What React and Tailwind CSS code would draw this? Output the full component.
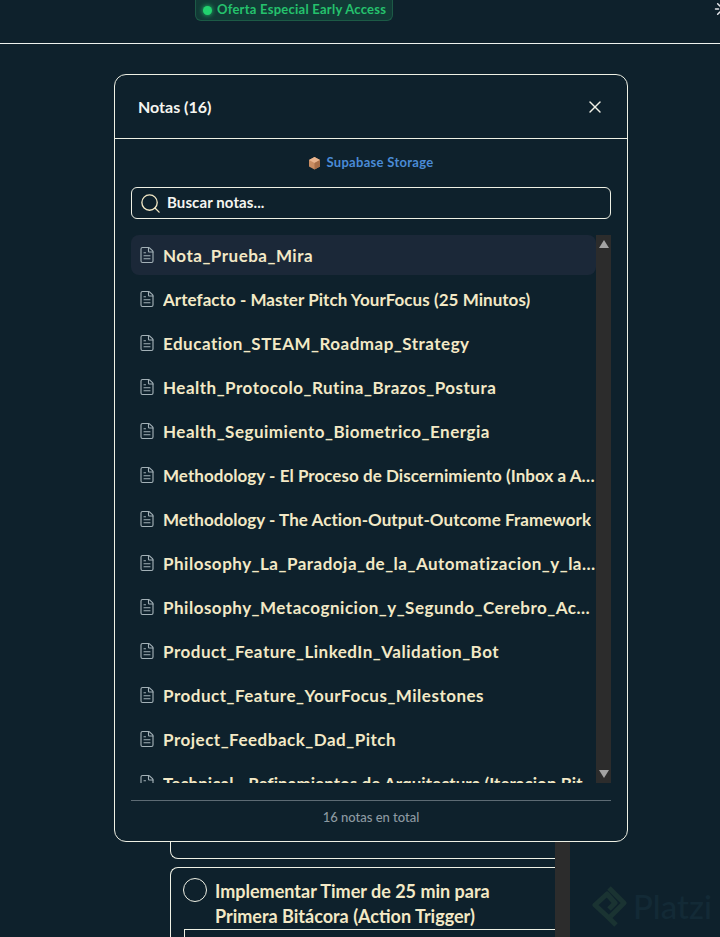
import React from 'react';
import { X, Search, FileText, Loader } from 'lucide-react';

const notes = [
  'Nota_Prueba_Mira',
  'Artefacto - Master Pitch YourFocus (25 Minutos)',
  'Education_STEAM_Roadmap_Strategy',
  'Health_Protocolo_Rutina_Brazos_Postura',
  'Health_Seguimiento_Biometrico_Energia',
  'Methodology - El Proceso de Discernimiento (Inbox a Action)',
  'Methodology - The Action-Output-Outcome Framework',
  'Philosophy_La_Paradoja_de_la_Automatizacion_y_la_Mente',
  'Philosophy_Metacognicion_y_Segundo_Cerebro_Activo',
  'Product_Feature_LinkedIn_Validation_Bot',
  'Product_Feature_YourFocus_Milestones',
  'Project_Feedback_Dad_Pitch',
  'Technical - Refinamientos de Arquitectura (Iteracion Bitacora)',
];

const NoteRow = ({ name, active }) => (
  <div className={`flex h-10 shrink-0 items-center gap-[7px] rounded-lg pl-[7px] ${active ? 'bg-[#1b2838]' : ''}`}>
    <FileText size={18} strokeWidth={1.5} className="shrink-0 text-[#a3b1b7]" />
    <span className={`truncate pt-[1px] text-[17px] font-bold text-[#f3e9c6] ${name.includes('_') ? 'tracking-[0.5px]' : 'tracking-[0.05px]'}`}>
      {name}
    </span>
  </div>
);

const BoxIcon = () => (
  <svg width="13" height="14" viewBox="0 0 13 14" className="shrink-0">
    <path d="M6.5 1 12 4v6.5L6.5 13.500 1 10.500V4z" fill="#c98d62" />
    <path d="M6.500 1 12 4 6.500 7 1 4z" fill="#e8b48e" />
    <path d="M6.500 7 12 4v6.500l-5.500 3z" fill="#a86f49" />
  </svg>
);

const PlatziMark = () => (
  <svg width="36" height="42" viewBox="0 0 36 42" fill="none" className="shrink-0">
    <path d="M18 3 33 18 18 33 4 20 16 9l8 9-6 6" stroke="#1a3332" strokeWidth="5" strokeLinejoin="round" />
    <path d="M18 33l7 7" stroke="#1a3332" strokeWidth="5" />
  </svg>
);

export default function App() {
  return (
    <div className="relative h-[937px] w-[720px] overflow-hidden bg-[#0e212c] font-['Lato',sans-serif]">
      {/* header */}
      <header className="relative flex h-11 border-b border-[#eef2ee] pl-[195px]">
        <div className="flex h-[21px] w-[198px] items-center gap-[5px] rounded-b-md border border-t-0 border-[#1c5a46] bg-[#123a36] pl-[7px]">
          <span className="h-[9px] w-[9px] rounded-full bg-[#22d36f] shadow-[0_0_5px_#22d36f]" />
          <span className="text-[13px] font-bold tracking-[0.25px] whitespace-nowrap text-[#25c26d]">Oferta Especial Early Access</span>
        </div>
        <Loader size={18} className="absolute top-0 left-[714px] text-[#e5e7eb]" />
      </header>

      {/* tasks behind the modal */}
      <main className="relative flex h-[893px] pl-[170px]">
        <div className="flex w-[385px] flex-col gap-[8px] pt-[750px]">
          <div className="h-[65px] shrink-0 rounded-bl-lg border-b border-l border-[#eef0e4]" />
          <div className="flex h-[80px] shrink-0 flex-col rounded-tl-lg border-t border-l border-[#eef0e4] pt-[10px] pl-[12px]">
            <div className="flex gap-2">
              <span className="h-6 w-6 shrink-0 rounded-full border border-[#eef0e4]" />
              <p className="pt-[1px] text-[18px] leading-[25px] font-bold whitespace-nowrap text-[#f3e9c6]">
                Implementar Timer de 25 min para
                <br />
                Primera Bitácora (Action Trigger)
              </p>
            </div>
            <div className="ml-[1px] h-3 border-t border-l border-[#eef0e4]" />
          </div>
        </div>
        <div className="mt-[780px] w-[15px] bg-[#2c2c2c]" />
      </main>

      {/* platzi watermark */}
      <div className="absolute top-[885px] left-[591px] flex items-center gap-[6px]">
        <PlatziMark />
        <span className="text-[33px] leading-none font-medium text-[#132a36]">Platzi</span>
      </div>

      {/* notes modal */}
      <div className="absolute top-[74px] left-[114px] flex h-[768px] w-[514px] flex-col rounded-xl border border-[#eef0e4] bg-[#0e212c]">
        <div className="flex h-[64px] shrink-0 items-center justify-between border-b border-[#eef0e4] pr-[22px] pl-[23px]">
          <h2 className="text-[16px] font-bold text-[#f5f5f0]">Notas (16)</h2>
          <X size={20} strokeWidth={1.75} className="text-[#f1f1e6]" />
        </div>

        <div className="flex min-h-0 flex-1 flex-col px-4">
          <div className="flex h-[48px] shrink-0 items-center justify-center gap-[5px]">
            <BoxIcon />
            <span className="text-[13px] font-bold tracking-[0.3px] text-[#4a8bd6]">Supabase Storage</span>
          </div>

          <div className="flex h-8 shrink-0 items-center gap-[5px] rounded-md border border-[#eef0e4] pl-[7px]">
            <Search size={23} strokeWidth={1.4} className="text-[#f3e9c6]" />
            <span className="pb-[1px] text-[15px] font-bold tracking-[0.1px] text-[#f5f5f0]">Buscar notas...</span>
          </div>

          <div className="mt-4 flex h-[548px] shrink-0 overflow-hidden">
            <div className="flex min-w-0 flex-1 flex-col gap-1 overflow-hidden">
              {notes.map((name, i) => (
                <NoteRow key={name} name={name} active={i === 0} />
              ))}
            </div>
            <div className="flex w-[15px] shrink-0 flex-col items-center justify-between bg-[#2c2c2c] py-[5px]">
              <span className="h-0 w-0 border-x-[5px] border-b-[8px] border-x-transparent border-b-[#a3a3a3]" />
              <span className="h-0 w-0 border-x-[5px] border-t-[8px] border-x-transparent border-t-[#a3a3a3]" />
            </div>
          </div>

          <div className="mt-[17px] flex flex-1 justify-center border-t border-[#5d6b74] pt-[7px]">
            <span className="text-[13px] font-medium text-[#8d9aa2]">16 notas en total</span>
          </div>
        </div>
      </div>
    </div>
  );
}
